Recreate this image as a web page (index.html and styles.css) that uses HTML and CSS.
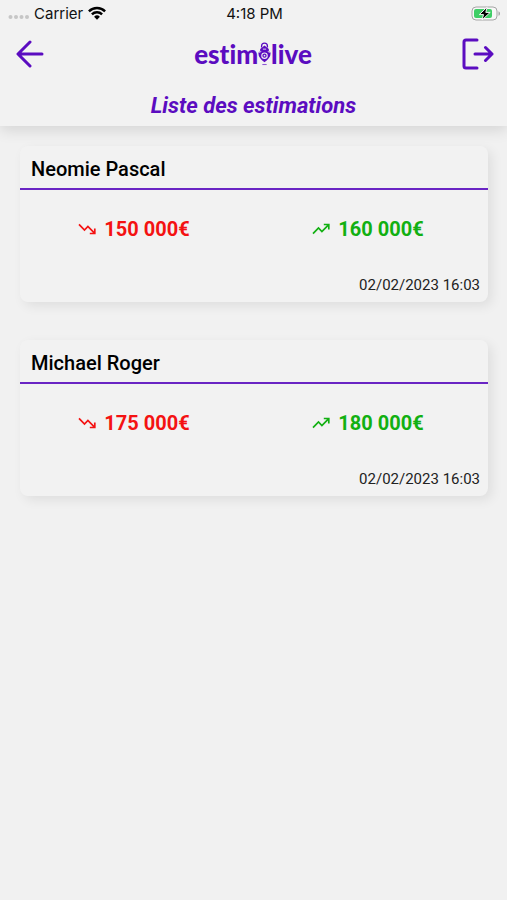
FILE: index.html
```html
<!DOCTYPE html>
<html lang="fr">
<head>
<meta charset="UTF-8">
<meta name="viewport" content="width=device-width, initial-scale=1.0">
<title>Liste des estimations</title>
<link rel="stylesheet" href="styles.css">
</head>
<body>
<header class="header">
    <div class="status-bar">
        <div class="carrier">
            <svg width="22" height="12" viewBox="0 0 22 12" fill="#c6c6c6" aria-hidden="true">
                <circle cx="2.5" cy="10" r="2"/><circle cx="8" cy="10" r="2"/><circle cx="13.500" cy="10" r="2"/><circle cx="19" cy="10" r="2"/>
            </svg>
            <span>Carrier</span>
            <svg class="wifi" width="18" height="14" viewBox="0 0 18 14" fill="none" stroke="#000" stroke-width="2.400" aria-hidden="true">
                <path d="M.9 5.300a11.500 11.500 0 0 1 16.200 0M3.900 8.400a7.200 7.200 0 0 1 10.200 0"/>
                <path d="M9 13.700 6.100 10.700a4.100 4.100 0 0 1 5.800 0z" fill="#000" stroke="none"/>
            </svg>
        </div>
        <span class="time">4:18 PM</span>
        <svg class="battery" width="30" height="15" viewBox="0 0 30 15" aria-hidden="true">
            <rect x="1" y="1" width="25" height="13" rx="4" fill="#f8f8f8" stroke="#a5a5a5"/>
            <rect x="3" y="3" width="18" height="9" rx="2" fill="#3fce66"/>
            <path d="M27.500 5.200v4.600c2-.8 2-3.800 0-4.600z" fill="#a5a5a5"/>
            <path d="M16.200 1 8.300 8.600h4.200L11 14l8.200-7.600h-4.400z" fill="#000" stroke="#f8f8f8" stroke-width="1"/>
        </svg>
    </div>
    <div class="nav">
        <button class="icon-btn" type="button" aria-label="Retour">
            <svg width="28" height="28" viewBox="0 0 28 28" fill="none" stroke="#5b0cc0" stroke-width="3" stroke-linecap="round" stroke-linejoin="round">
                <path d="M14 2 2 14l12 12M2.500 14H26"/>
            </svg>
        </button>
        <div class="logo">
            <span>estim</span>
            <svg width="13" height="24" viewBox="0 0 12 22" aria-hidden="true">
                <path d="M3.300 5V3.700a2.700 2.700 0 0 1 5.400 0V5" fill="none" stroke="#5b0cc0" stroke-width="1.200"/>
                <path d="M6 3.200 10 6.300v2l1.500 1.200c.6 3.700-1.700 6.500-5.500 9-3.800-2.500-6.100-5.300-5.500-9L2 8.300v-2z" fill="#5b0cc0"/>
                <path d="M4.500 6.500h3M.8 9.500 3 8.700M11.200 9.500 9 8.700" stroke="#f1f1f1" stroke-width=".8"/>
                <circle cx="6" cy="12.500" r="2.500" fill="#5b0cc0" stroke="#f1f1f1"/>
                <circle cx="6" cy="12.500" r=".8" fill="#f1f1f1"/>
                <path d="M4 20.700h4" stroke="#8d59d2" stroke-width="1"/>
            </svg>
            <span>live</span>
        </div>
        <button class="icon-btn" type="button" aria-label="Se déconnecter">
            <svg width="32" height="32" viewBox="0 0 32 32" fill="none" stroke="#5b0cc0" stroke-width="3" stroke-linecap="round" stroke-linejoin="round">
                <path d="M15 2H4a2 2 0 0 0-2 2v24a2 2 0 0 0 2 2h11"/>
                <path d="M13 16h17M23.500 9.500 30 16l-6.500 6.500"/>
            </svg>
        </button>
    </div>
    <h1>Liste des estimations</h1>
</header>

<main class="list">
    <article class="card">
        <h2>Neomie Pascal</h2>
        <div class="prices">
            <div class="price low">
                <svg width="18" height="12" viewBox="0 0 18 12" fill="none" stroke="currentColor" stroke-width="1.700" aria-hidden="true">
                    <path d="M1 1.300 6.500 7l3.400-3.500 6.600 6.700M11.800 10.500h5V5.600"/>
                </svg>
                <span>150 000€</span>
            </div>
            <div class="price high">
                <svg width="18" height="12" viewBox="0 0 18 12" fill="none" stroke="currentColor" stroke-width="1.700" aria-hidden="true">
                    <path d="M1 10.700 6.500 5l3.400 3.500 6.600-6.700M11.800 1.500h5v4.900"/>
                </svg>
                <span>160 000€</span>
            </div>
        </div>
        <time datetime="2023-02-02T16:03">02/02/2023 16:03</time>
    </article>

    <article class="card">
        <h2>Michael Roger</h2>
        <div class="prices">
            <div class="price low">
                <svg width="18" height="12" viewBox="0 0 18 12" fill="none" stroke="currentColor" stroke-width="1.700" aria-hidden="true">
                    <path d="M1 1.300 6.500 7l3.400-3.500 6.600 6.700M11.800 10.500h5V5.600"/>
                </svg>
                <span>175 000€</span>
            </div>
            <div class="price high">
                <svg width="18" height="12" viewBox="0 0 18 12" fill="none" stroke="currentColor" stroke-width="1.700" aria-hidden="true">
                    <path d="M1 10.700 6.500 5l3.400 3.500 6.600-6.700M11.800 1.500h5v4.900"/>
                </svg>
                <span>180 000€</span>
            </div>
        </div>
        <time datetime="2023-02-02T16:03">02/02/2023 16:03</time>
    </article>
</main>
</body>
</html>
```

FILE: styles.css
```css
* {
    box-sizing: border-box;
}
body {
    margin: 0;
    min-height: 100vh;
    background-color: #f1f1f1;
    color: #000;
    font-family: Roboto, sans-serif;
}
.header {
    background-color: #f2f2f2;
    box-shadow: 0 4px 14px rgba(0,0,0,0.12);
}
.status-bar {
    display: grid;
    grid-template-columns: 1fr auto 1fr;
    align-items: center;
    height: 26px;
    padding: 0 6px 0 8px;
    font-family: Inter, sans-serif;
    font-size: 15px;
    color: #111;
}
.carrier {
    display: flex;
    align-items: center;
    gap: 4px;
}
.wifi {
    margin-left: 1px;
}
.battery {
    justify-self: end;
}
.nav {
    display: flex;
    justify-content: space-between;
    align-items: center;
    height: 56px;
    padding: 0 13px 0 16px;
}
.icon-btn {
    display: flex;
    padding: 0;
    border: none;
    background: none;
    cursor: pointer;
}
.logo {
    display: flex;
    align-items: center;
    color: #5b0cc0;
    font-family: Lato, sans-serif;
    font-size: 26px;
    font-weight: 900;
    font-variant-ligatures: none;
    line-height: 30px;
}
h1 {
    margin: 0;
    padding: 11px 0 7px;
    color: #5b0cc0;
    font-size: 22px;
    font-style: italic;
    font-weight: 700;
    line-height: 26px;
    text-align: center;
}
.list {
    display: flex;
    flex-direction: column;
    gap: 38px;
    padding: 20px 19px 20px 20px;
}
.card {
    border-radius: 8px;
    background-color: #f2f2f2;
    box-shadow: 4px 4px 12px rgba(0,0,0,0.08);
}
h2 {
    margin: 0;
    padding: 11px 11px 7px;
    border-bottom: 2px solid #6a25c4;
    font-size: 20px;
    font-weight: 500;
    line-height: 24px;
}
.prices {
    display: grid;
    grid-template-columns: 1fr 1fr;
    padding: 26px 0 33px;
}
.price {
    display: flex;
    justify-content: center;
    align-items: center;
    gap: 8px;
    padding-right: 6px;
    font-size: 20px;
    font-weight: 700;
    line-height: 26px;
}
.low {
    color: #f41212;
}
.high {
    color: #12b012;
}
time {
    display: block;
    padding: 0 8px 7px;
    color: #222;
    font-size: 15px;
    line-height: 20px;
    text-align: right;
}
```
